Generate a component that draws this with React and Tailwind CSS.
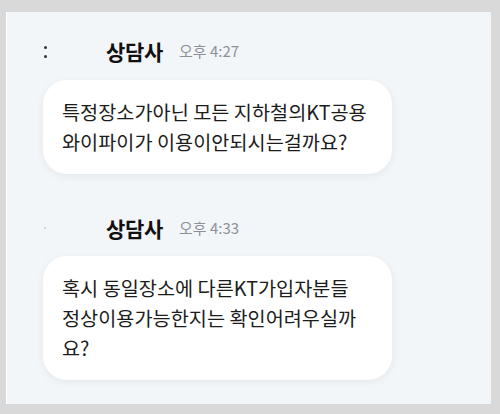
const font = { fontFamily: '"Noto Sans CJK KR", "Noto Sans", sans-serif' };

function Header({ time, dots }) {
  return (
    <div className="flex h-[20px] items-center">
      <div className="flex w-[61px] justify-start pl-[37px]">
        {dots ? (
          <div className="mt-[2px] flex flex-col gap-[6px]">
            <span className="h-[3px] w-[3px] rounded-full bg-[#333]" />
            <span className="h-[3px] w-[3px] rounded-full bg-[#333]" />
          </div>
        ) : (
          <span className="h-[2px] w-[2px] rounded-full bg-[#ccd0d4]" />
        )}
      </div>
      <span className="ml-[38px] text-[21px] font-bold leading-[20px] tracking-[-0.3px] text-[#111]">상담사</span>
      <span className="ml-[16px] text-[15px] leading-[20px] text-[#8c9197]">{time}</span>
    </div>
  );
}

function Bubble({ lines }) {
  return (
    <div className="ml-[36px] w-[349px] rounded-[24px] bg-white px-[19px] py-[17px] shadow-[0_2px_8px_rgba(0,0,0,0.06)]">
      {lines.map((l) => (
        <div key={l} className="whitespace-nowrap text-[19.7px] leading-[30px] text-[#1c1c1c]">
          {l}
        </div>
      ))}
    </div>
  );
}

export default function App() {
  return (
    <div className="h-[414px] w-[500px] overflow-hidden bg-[#d9d9d9] pt-[12px] pl-[6px]" style={font}>
      <div className="h-[392px] w-[485px] border-l border-white bg-[#f3f6f9] pt-[29px]">
        <Header time="오후 4:27" dots />
        <div className="mt-[19px]">
          <Bubble lines={['특정장소가아닌 모든 지하철의KT공용', '와이파이가 이용이안되시는걸까요?']} />
        </div>
        <div className="mt-[44px]">
          <Header time="오후 4:33" />
        </div>
        <div className="mt-[18px]">
          <Bubble lines={['혹시 동일장소에 다른KT가입자분들', '정상이용가능한지는 확인어려우실까', '요?']} />
        </div>
      </div>
    </div>
  );
}
